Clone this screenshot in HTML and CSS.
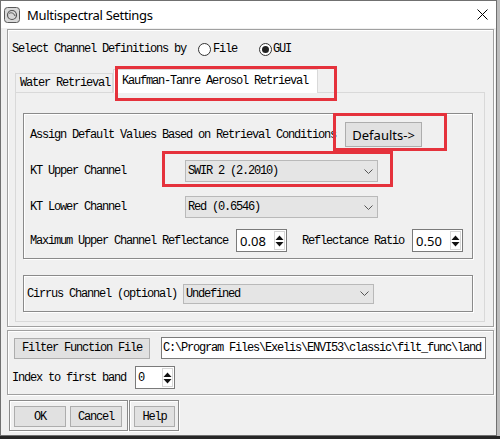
FILE: index.html
```html
<!DOCTYPE html>
<html>
<head>
<meta charset="utf-8">
<link rel="stylesheet" href="styles.css">
</head>
<body>
<div class="window">
  <div class="titlebar">
    <svg class="app-icon" viewBox="0 0 16 16">
      <rect x="0.5" y="0.5" width="15" height="15" rx="3" fill="#d9d9d9" stroke="#5a5a5a"/>
      <circle cx="8" cy="8" r="4.5" fill="none" stroke="#555" stroke-width="1.2"/>
      <path d="M5 6.5 C7 5, 10 6, 11 9" fill="none" stroke="#555" stroke-width="1"/>
    </svg>
    <span class="title">Multispectral Settings</span>
    <svg class="close" viewBox="0 0 11 11">
      <path d="M0.5 0.5 L10.5 10.5 M10.5 0.5 L0.5 10.5" stroke="#000" stroke-width="1"/>
    </svg>
  </div>
  <div class="content">
    <div class="panel panel-main">
      <div class="select-row mono">
        <span>Select Channel Definitions by</span>
        <span class="radio radio-file"><span class="radio-circle"></span><span class="radio-text">File</span></span>
        <span class="radio radio-gui"><span class="radio-circle checked"></span><span class="radio-text">GUI</span></span>
      </div>
      <div class="tabs">
        <div class="tab-strip mono">
          <div class="tab tab-water">Water Retrieval</div>
          <div class="tab tab-active">Kaufman-Tanre Aerosol Retrieval</div>
        </div>
        <div class="tab-pane mono">
          <div class="group group-kt">
            <div class="row row-defaults">
              <span>Assign Default Values Based on Retrieval Conditions</span>
              <button class="btn btn-defaults">Defaults-&gt;</button>
            </div>
            <div class="row row-upper">
              <span class="label">KT Upper Channel</span>
              <div class="combo"><span>SWIR 2 (2.2010)</span>
                <svg class="chev" viewBox="0 0 9 5"><polyline points="0.5,0.5 4.5,4.5 8.5,0.5" fill="none" stroke="#555"/></svg>
              </div>
            </div>
            <div class="row row-lower">
              <span class="label">KT Lower Channel</span>
              <div class="combo"><span>Red (0.6546)</span>
                <svg class="chev" viewBox="0 0 9 5"><polyline points="0.5,0.5 4.5,4.5 8.5,0.5" fill="none" stroke="#555"/></svg>
              </div>
            </div>
            <div class="row row-refl">
              <span>Maximum Upper Channel Reflectance</span>
              <div class="spin spin-refl"><span class="spin-val sans">0.08</span>
                <span class="spin-arrows"><svg viewBox="0 0 9 14"><polygon points="0.5,6 4.5,1.5 8.5,6" fill="#111"/><polygon points="0.5,8 4.5,12.5 8.5,8" fill="#111"/></svg></span>
              </div>
              <span class="ratio-label">Reflectance Ratio</span>
              <div class="spin spin-ratio"><span class="spin-val sans">0.50</span>
                <span class="spin-arrows"><svg viewBox="0 0 9 14"><polygon points="0.5,6 4.5,1.5 8.5,6" fill="#111"/><polygon points="0.5,8 4.5,12.5 8.5,8" fill="#111"/></svg></span>
              </div>
            </div>
          </div>
          <div class="group group-cirrus">
            <span>Cirrus Channel (optional)</span>
            <div class="combo combo-cirrus"><span>Undefined</span>
              <svg class="chev" viewBox="0 0 9 5"><polyline points="0.5,0.5 4.5,4.5 8.5,0.5" fill="none" stroke="#555"/></svg>
            </div>
          </div>
        </div>
      </div>
    </div>
    <div class="panel panel-filter mono">
      <div class="filter-row">
        <button class="btn btn-filter">Filter Function File</button>
        <div class="path-input">C:\Program Files\Exelis\ENVI53\classic\filt_func\land</div>
      </div>
      <div class="index-row">
        <span>Index to first band</span>
        <div class="spin spin-index"><span class="spin-val">0</span>
          <span class="spin-arrows"><svg viewBox="0 0 9 14"><polygon points="0.5,6 4.5,1.5 8.5,6" fill="#111"/><polygon points="0.5,8 4.5,12.5 8.5,8" fill="#111"/></svg></span>
        </div>
      </div>
    </div>
    <div class="actions mono">
      <div class="btn-box box-main">
        <button class="btn btn-ok">OK</button>
        <button class="btn btn-cancel">Cancel</button>
      </div>
      <div class="btn-box box-help">
        <button class="btn btn-help">Help</button>
      </div>
    </div>
  </div>
  <div class="mark mark-tab"></div>
  <div class="mark mark-defaults"></div>
  <div class="mark mark-upper"></div>
</div>
</body>
</html>
```

FILE: styles.css
```css
* { box-sizing: border-box; }
html, body { margin: 0; padding: 0; }
body {
  width: 500px;
  height: 439px;
  overflow: hidden;
  background: linear-gradient(#bdbdbd 0, #bdbdbd 436px, #262626 436px);
}
.window {
  position: relative;
  width: 497px;
  height: 436px;
  border: 1px solid #707070;
  background: #f0f0f0;
  display: flex;
  flex-direction: column;
}
.titlebar {
  flex: none;
  height: 27px;
  background: #fff;
  display: flex;
  align-items: center;
}
.app-icon { width: 16px; height: 16px; margin-left: 3px; flex: none; }
.title {
  margin-left: 7px;
  font-family: "Noto Sans", sans-serif;
  font-size: 13px;
  letter-spacing: -0.3px;
  color: #000;
}
.close { width: 11px; height: 11px; margin-left: auto; margin-right: 8px; flex: none; }

.mono {
  font-family: "Liberation Mono", monospace;
  font-size: 12px;
  letter-spacing: -1.2px;
  color: #000;
}
.sans {
  font-family: "Noto Sans", sans-serif;
  font-size: 13px;
  letter-spacing: 0;
}
.content {
  flex: 1;
  padding: 1px 2px 0 6px;
  display: flex;
  flex-direction: column;
}
.panel {
  border: 1px solid #a0a0a0;
  box-shadow: inset 1px 1px 0 #fff, 1px 1px 0 #fff;
}
.panel-main {
  height: 298px;
  padding: 8px 0 0 4px;
}
.select-row {
  height: 22px;
  display: flex;
  align-items: center;
  white-space: pre;
}
.radio { display: flex; align-items: center; }
.radio-file { margin-left: 12px; }
.radio-gui { margin-left: 22px; }
.radio-circle {
  width: 13px;
  height: 13px;
  border-radius: 50%;
  border: 1px solid #333;
  background: #fff;
  display: flex;
  align-items: center;
  justify-content: center;
}
.radio-circle.checked::after {
  content: "";
  width: 7px;
  height: 7px;
  border-radius: 50%;
  background: #222;
}
.radio-file .radio-text { margin-left: 2px; }
.radio-gui .radio-text { margin-left: 1px; }

.tabs { margin-top: 9px; margin-left: 3px; width: 470px; }
.tab-strip {
  height: 23px;
  display: flex;
  align-items: flex-end;
}
.tab {
  display: flex;
  align-items: center;
  white-space: pre;
  border: 1px solid #d9d9d9;
  border-bottom: none;
}
.tab-water {
  width: 98px;
  height: 19px;
  padding-left: 4px;
  background: #f0f0f0;
}
.tab-active {
  width: 205px;
  height: 24px;
  margin-bottom: -1px;
  padding-left: 8px;
  padding-bottom: 1px;
  background: #fff;
  position: relative;
  z-index: 1;
}
.tab-pane {
  height: 230px;
  border: 1px solid #d9d9d9;
  background: #f0f0f0;
  padding: 20px 0 0 7px;
}
.group {
  width: 450px;
  border: 1px solid #8a8a8a;
  box-shadow: inset 1px 1px 0 #fff, 1px 1px 0 #fff;
}
.group-kt {
  height: 146px;
  padding: 8px 6px 0 6px;
  display: flex;
  flex-direction: column;
}
.row { display: flex; align-items: center; white-space: pre; }
.row-defaults { height: 25px; }
.row-upper { height: 22px; margin-top: 13px; }
.row-lower { height: 22px; margin-top: 14px; }
.row-refl { height: 23px; margin-top: 11px; }
.label { width: 155px; flex: none; }

.btn {
  font: inherit;
  letter-spacing: inherit;
  color: #000;
  background: #e1e1e1;
  border: 1px solid #adadad;
  padding: 0;
  margin: 0;
  display: flex;
  align-items: center;
  justify-content: center;
  white-space: pre;
}
.btn-defaults {
  margin-left: 9px;
  width: 77px;
  height: 25px;
  font-family: "Noto Sans", sans-serif;
  font-size: 13px;
  letter-spacing: 0;
}
.combo {
  width: 193px;
  height: 22px;
  background: #e5e5e5;
  border: 1px solid #b9b9b9;
  display: flex;
  align-items: center;
  padding-left: 2px;
  padding-right: 4px;
}
.combo .chev { width: 9px; height: 5px; margin-left: auto; }
.spin {
  height: 23px;
  background: #fff;
  border: 1px solid #7a7a7a;
  display: flex;
  align-items: center;
  padding-left: 3px;
  padding-right: 1px;
}
.spin-refl { width: 51px; margin-left: 8px; }
.spin-ratio { width: 51px; margin-left: 8px; }
.ratio-label { margin-left: 15px; }
.spin-arrows {
  margin-left: auto;
  width: 11px;
  height: 19px;
  border: 1px solid #d6d6d6;
  display: flex;
  align-items: center;
  justify-content: center;
}
.spin-arrows svg { width: 9px; height: 14px; }

.group-cirrus {
  margin-top: 16px;
  height: 37px;
  padding-left: 3px;
  display: flex;
  align-items: center;
  white-space: pre;
}
.combo-cirrus { width: 191px; height: 20px; margin-left: 6px; }

.panel-filter {
  margin-top: 3px;
  height: 65px;
  padding: 6px 0 0 4px;
}
.filter-row { height: 22px; display: flex; align-items: center; margin-left: 2px; }
.btn-filter { width: 136px; height: 21px; }
.path-input {
  margin-left: 11px;
  width: 325px;
  height: 22px;
  background: #fff;
  border: 1px solid #7a7a7a;
  padding-left: 1px;
  display: flex;
  align-items: center;
  white-space: pre;
  overflow: hidden;
}
.index-row {
  margin-top: 7px;
  height: 23px;
  display: flex;
  align-items: center;
  white-space: pre;
}
.spin-index { width: 40px; margin-left: 9px; padding-left: 2px; }

.actions {
  margin-top: 5px;
  margin-left: 2px;
  display: flex;
  gap: 1px;
}
.btn-box {
  height: 31px;
  border: 1px solid #8a8a8a;
  box-shadow: inset 1px 1px 0 #fff, 1px 1px 0 #fff;
  display: flex;
  padding-top: 5px;
  padding-left: 4px;
}
.box-main { width: 119px; }
.box-help { width: 50px; }
.btn-ok, .btn-cancel { width: 52px; height: 21px; }
.btn-cancel { margin-left: 4px; }
.btn-help { width: 41px; height: 21px; }

.mark {
  position: absolute;
  border: 3px solid #e5323c;
  pointer-events: none;
  z-index: 5;
}
.mark-tab { left: 114px; top: 65px; width: 222px; height: 35px; }
.mark-defaults { left: 332px; top: 112px; width: 114px; height: 38px; }
.mark-upper { left: 161px; top: 150px; width: 231px; height: 36px; }
```
